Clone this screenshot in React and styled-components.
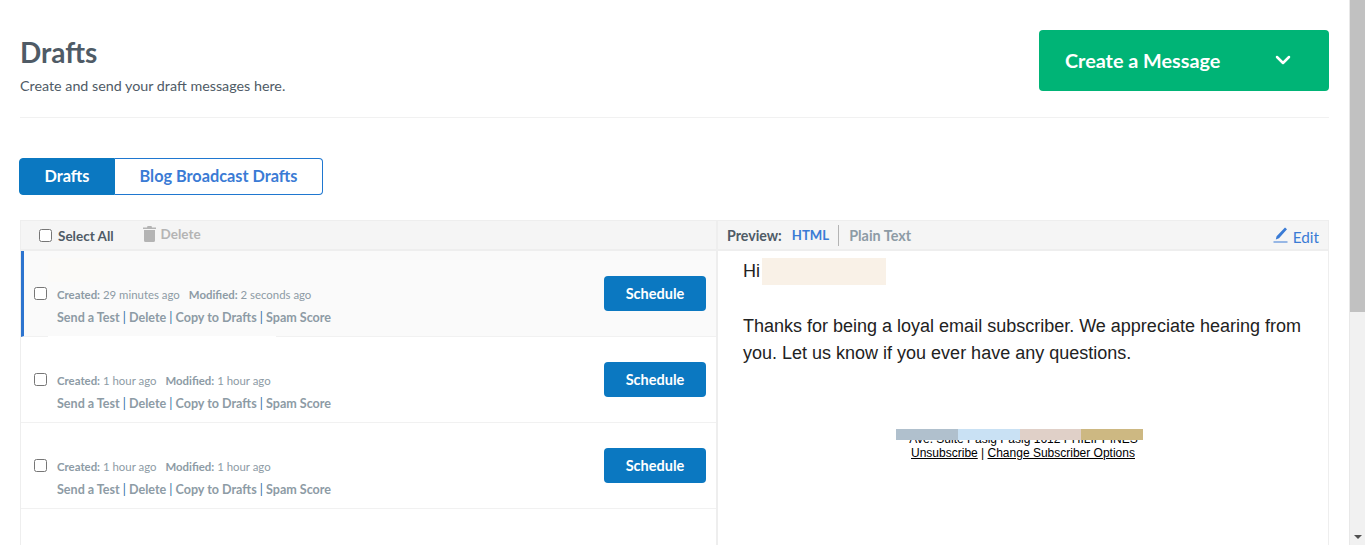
import React from 'react';
import styled, { createGlobalStyle } from 'styled-components';
import { ChevronDown } from 'lucide-react';

const GlobalStyle = createGlobalStyle`
    html, body {
        margin: 0;
        padding: 0;
        height: 100%;
        overflow: hidden;
        background: white;
    }
    body {
        font-family: "Lato", "Open Sans", sans-serif;
        color: #4f5b66;
    }
`;

const Page = styled.div`
    display: flex;
    width: 1365px;
    height: 545px;
    overflow: hidden;
`;
const Main = styled.div`
    width: 1309px;
    margin-left: 20px;
    margin-right: 20px;
    flex-shrink: 0;
`;

// Scrollbar
const Scrollbar = styled.div`
    width: 16px;
    height: 545px;
    display: flex;
    flex-direction: column;
    background: #f1f1f1;
    border-left: 1px solid #e8e8e8;
    box-sizing: border-box;
`;
const ScrollThumb = styled.div`
    height: 312px;
    background: #c1c1c1;
`;
const ScrollSpace = styled.div`
    flex: 1;
`;
const ScrollArrow = styled.div`
    height: 17px;
    display: flex;
    align-items: center;
    justify-content: center;
    &:after {
        content: '';
        border-left: 4px solid transparent;
        border-right: 4px solid transparent;
        border-top: 4px solid #505050;
    }
`;

// Header
const Header = styled.div`
    display: flex;
    justify-content: space-between;
    height: 118px;
    box-sizing: border-box;
    padding-top: 30px;
    border-bottom: 1px solid #f1f1f1;
`;
const Title = styled.h1`
    margin: 6px 0 0;
    font-size: 28px;
    line-height: 32px;
    font-weight: 700;
    color: #4f5b66;
`;
const Subtitle = styled.p`
    margin: 8px 0 0;
    font-size: 14.3px;
    line-height: 20px;
    color: #4f5b66;
`;
const CreateButton = styled.button`
    width: 290px;
    height: 61px;
    padding: 0 34px 2px 26px;
    display: flex;
    align-items: center;
    justify-content: space-between;
    background: #00b476;
    color: white;
    border: none;
    border-radius: 4px;
    font-family: inherit;
    font-size: 19.8px;
    font-weight: 700;
`;

// Tabs
const Tabs = styled.div`
    display: flex;
    width: 304px;
    height: 37px;
    margin: 40px 0 25px -1px;
`;
const Tab = styled.div`
    display: flex;
    align-items: center;
    justify-content: center;
    box-sizing: border-box;
    padding-bottom: 2px;
    font-size: 16.3px;
    font-weight: 700;
    width: ${p => (p.$active ? '96px' : '208px')};
    background: ${p => (p.$active ? '#0b78c1' : 'white')};
    color: ${p => (p.$active ? 'white' : '#3a7bd5')};
    border: 1px solid ${p => (p.$active ? '#0b78c1' : '#1f77d0')};
    border-left-width: ${p => (p.$active ? '1px' : '0')};
    border-radius: ${p => (p.$active ? '4px 0 0 4px' : '0 4px 4px 0')};
`;

// Panel
const Panel = styled.div`
    display: grid;
    grid-template-columns: 697px 1fr;
    height: 325px;
    box-sizing: border-box;
    border: 1px solid #eeeeee;
    border-bottom: none;
`;
const ListColumn = styled.div`
    border-right: 2px solid #eeeeee;
    min-width: 0;
`;
const PreviewColumn = styled.div`
    min-width: 0;
`;
const Toolbar = styled.div`
    display: flex;
    align-items: center;
    height: 30px;
    box-sizing: border-box;
    background: #f5f5f5;
    border-bottom: 2px solid #eeeeee;
    font-size: 13.5px;
    font-weight: 700;
`;
const SelectAll = styled.label`
    display: flex;
    align-items: center;
    margin-left: 18px;
    color: #4f5b66;
    span {
        position: relative;
        top: 1px;
    }
`;
const Box = styled.input.attrs({ type: 'checkbox' })`
    width: 13px;
    height: 13px;
    margin: 0 6px 0 0;
    flex-shrink: 0;
`;
const ToolDelete = styled.span`
    display: flex;
    align-items: center;
    gap: 5px;
    margin-left: 29px;
    color: #b4b4b4;
    position: relative;
    top: -1px;
`;

// Draft rows
const Row = styled.div`
    position: relative;
    display: flex;
    align-items: center;
    height: 86px;
    box-sizing: border-box;
    padding: 0 10px 0 ${p => (p.$selected ? '10px' : '13px')};
    background: ${p => (p.$selected ? '#fafafa' : 'white')};
    border-left: ${p => (p.$selected ? '3px solid #2c74cf' : 'none')};
    border-bottom: 1px solid #f1f1f1;
`;
const SubjectPatch = styled.div`
    position: absolute;
    left: ${p => p.$left}px;
    top: ${p => p.$top}px;
    width: ${p => p.$width}px;
    height: 24px;
    background: ${p => p.$color};
`;
const RowBox = styled(Box)`
    margin: 0 10px 0 0;
`;
const RowInfo = styled.div`
    flex: 1;
    min-width: 0;
    padding-top: 26px;
`;
const Meta = styled.div`
    font-size: 11.4px;
    line-height: 16px;
    color: #8d9ba5;
    display: flex;
    gap: 9px;
    b {
        font-weight: 700;
    }
`;
const Actions = styled.div`
    margin-top: 6px;
    font-size: 12.55px;
    line-height: 18px;
    font-weight: 700;
    color: #8d9ba5;
    span {
        font-weight: 400;
        color: #2f6f9f;
    }
`;
const ScheduleButton = styled.button`
    width: 102px;
    height: 35px;
    background: #0b78c1;
    color: white;
    border: none;
    border-radius: 4px;
    font-family: inherit;
    font-size: 14.5px;
    font-weight: 700;
`;

// Preview
const PreviewLabel = styled.span`
    margin-left: 9px;
    font-size: 14.2px;
    color: #4f5b66;
`;
const PreviewTab = styled.span`
    font-size: ${p => (p.$active ? '13.2px' : '14.4px')};
    color: ${p => (p.$active ? '#3a7bd5' : '#8d9ba5')};
    margin-left: 10px;
    padding-right: ${p => (p.$active ? '9px' : '0')};
    height: ${p => (p.$active ? '21px' : 'auto')};
    line-height: 21px;
    border-right: ${p => (p.$active ? '1px solid #b4b4b4' : 'none')};
`;
const EditLink = styled.span`
    display: flex;
    align-items: center;
    gap: 4px;
    margin-left: auto;
    margin-right: 9px;
    color: #3a7bd5;
    font-size: 15.3px;
    font-weight: 400;
    span {
        position: relative;
        top: 2px;
    }
`;
const MailBody = styled.div`
    padding: 7px 26px 0 25px;
    font-family: "Liberation Sans", Arial, sans-serif;
    font-size: 18px;
    line-height: 27px;
    color: #222222;
`;
const Greeting = styled.div`
    display: flex;
    margin-bottom: 28px;
`;
const NamePatch = styled.span`
    width: 124px;
    height: 27px;
    margin-left: 2px;
    background: #f9f1e7;
`;
const MailText = styled.p`
    margin: 0;
`;
const MailFooter = styled.div`
    position: relative;
    width: 247px;
    margin: 65px 0 0 153px;
    text-align: center;
    font-size: 12px;
    line-height: 14px;
    color: black;
    a {
        color: black;
        text-decoration: underline;
    }
`;
const Address = styled.div`
    white-space: nowrap;
    padding-left: 8px;
`;
const FooterLinks = styled.div`
    padding-left: 7px;
`;
const ColorStrip = styled.div`
    position: absolute;
    left: 0;
    top: -3px;
    width: 100%;
    height: 11px;
    display: grid;
    grid-template-columns: repeat(4, 1fr);
`;
const StripPart = styled.div`
    background: ${p => p.$color};
`;

const drafts = [
    { id: 1, created: '29 minutes ago', modified: '2 seconds ago', selected: true, patch: { left: 24, top: 7, width: 62, color: '#fbfaf8' } },
    { id: 2, created: '1 hour ago', modified: '1 hour ago', patch: { left: 27, top: -1, width: 228, color: 'white' } },
    { id: 3, created: '1 hour ago', modified: '1 hour ago' },
];

const App = () => (
    <Page>
        <GlobalStyle />
        <Main>
            <Header>
                <div>
                    <Title>Drafts</Title>
                    <Subtitle>Create and send your draft messages here.</Subtitle>
                </div>
                <CreateButton>
                    Create a Message
                    <ChevronDown size={24} strokeWidth={2.5} />
                </CreateButton>
            </Header>
            <Tabs>
                <Tab $active>Drafts</Tab>
                <Tab>Blog Broadcast Drafts</Tab>
            </Tabs>
            <Panel>
                <ListColumn>
                    <Toolbar>
                        <SelectAll><Box /><span>Select All</span></SelectAll>
                        <ToolDelete>
                            <svg width="13" height="16" viewBox="0 0 13 16" fill="#b4b4b4">
                                <path d="M4.5 0h4l.5 1.5h4V3H0V1.5h4zM1 4h11v10.5a1.5 1.5 0 0 1-1.5 1.5h-8A1.5 1.5 0 0 1 1 14.5z" />
                            </svg>
                            Delete
                        </ToolDelete>
                    </Toolbar>
                    {drafts.map(d => (
                        <Row key={d.id} $selected={d.selected}>
                            {d.patch && (
                                <SubjectPatch
                                    $left={d.patch.left}
                                    $top={d.patch.top}
                                    $width={d.patch.width}
                                    $color={d.patch.color}
                                />
                            )}
                            <RowBox />
                            <RowInfo>
                                <Meta>
                                    <div><b>Created:</b> {d.created}</div>
                                    <div><b>Modified:</b> {d.modified}</div>
                                </Meta>
                                <Actions>
                                    Send a Test <span>|</span> Delete <span>|</span> Copy to Drafts <span>|</span> Spam Score
                                </Actions>
                            </RowInfo>
                            <ScheduleButton>Schedule</ScheduleButton>
                        </Row>
                    ))}
                </ListColumn>
                <PreviewColumn>
                    <Toolbar>
                        <PreviewLabel>Preview:</PreviewLabel>
                        <PreviewTab $active>HTML</PreviewTab>
                        <PreviewTab>Plain Text</PreviewTab>
                        <EditLink>
                            <svg width="16" height="16" viewBox="0 0 16 16" fill="#3a7bd5">
                                <path d="M12 0.5l2 1.8-8 9-3.2 1.2 0.8-3.2zM0.5 14.5h14v1h-14z" />
                            </svg>
                            <span>Edit</span>
                        </EditLink>
                    </Toolbar>
                    <MailBody>
                        <Greeting>Hi<NamePatch /></Greeting>
                        <MailText>
                            Thanks for being a loyal email subscriber. We appreciate hearing from you. Let us know if you ever have any questions.
                        </MailText>
                        <MailFooter>
                            <Address>Ave. Suite Pasig Pasig 1612 PHILIPPINES</Address>
                            <ColorStrip>
                                <StripPart $color="#b0c0cd" />
                                <StripPart $color="#c9e1f4" />
                                <StripPart $color="#e0d0c8" />
                                <StripPart $color="#cdb882" />
                            </ColorStrip>
                            <FooterLinks><a>Unsubscribe</a> | <a>Change Subscriber Options</a></FooterLinks>
                        </MailFooter>
                    </MailBody>
                </PreviewColumn>
            </Panel>
        </Main>
        <Scrollbar>
            <ScrollThumb />
            <ScrollSpace />
            <ScrollArrow />
        </Scrollbar>
    </Page>
);

export default App;
